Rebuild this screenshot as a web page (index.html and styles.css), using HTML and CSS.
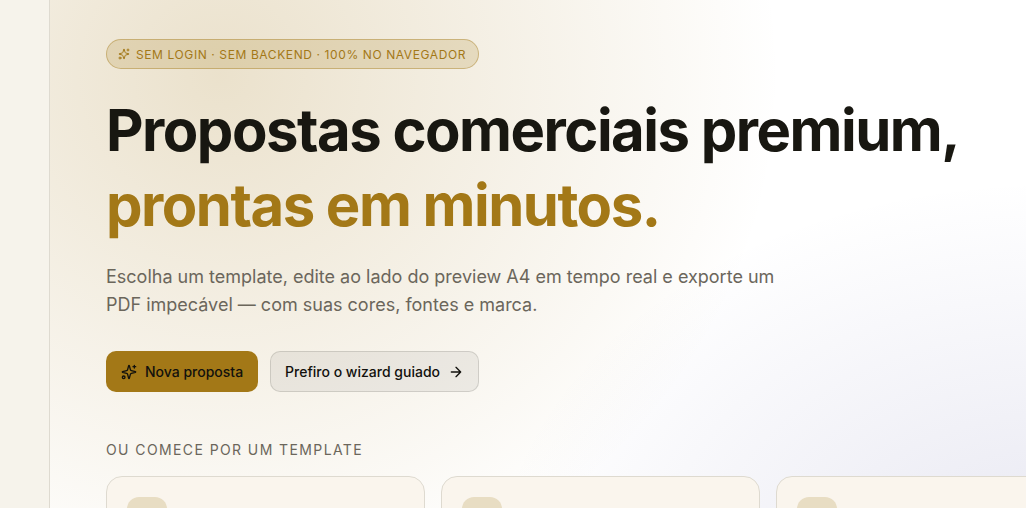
FILE: index.html
```html
<!DOCTYPE html>
<html lang="pt-BR">
<head>
<meta charset="utf-8">
<meta name="viewport" content="width=device-width, initial-scale=1">
<title>Propostas comerciais</title>
<link rel="stylesheet" href="styles.css">
</head>
<body>
<svg class="sprite" aria-hidden="true">
  <symbol id="sparkles" viewBox="0 0 24 24">
    <path d="M9.94 15.5A2 2 0 0 0 8.5 14.06l-6.14-1.58a.5.5 0 0 1 0-.96L8.5 9.94A2 2 0 0 0 9.94 8.5l1.58-6.14a.5.5 0 0 1 .96 0L14.06 8.5a2 2 0 0 0 1.44 1.44l6.14 1.58a.5.5 0 0 1 0 .96l-6.14 1.58a2 2 0 0 0-1.44 1.44l-1.58 6.14a.5.5 0 0 1-.96 0z"/>
    <path d="M20 2v4M22 4h-4"/><circle cx="4" cy="20" r="2"/>
  </symbol>
</svg>
<main class="hero">
  <p class="badge"><svg class="icon icon-small" aria-hidden="true"><use href="#sparkles"/></svg><span>SEM LOGIN · SEM BACKEND · 100% NO NAVEGADOR</span></p>
  <h1 class="title">Propostas comerciais premium,<br><span class="accent">prontas em minutos.</span></h1>
  <p class="lead">Escolha um template, edite ao lado do preview A4 em tempo real e exporte um PDF impecável — com suas cores, fontes e marca.</p>
  <div class="actions">
    <button class="button button-primary" type="button"><svg class="icon" aria-hidden="true"><use href="#sparkles"/></svg>Nova proposta</button>
    <button class="button button-secondary" type="button">Prefiro o wizard guiado<svg class="icon" viewBox="0 0 24 24" aria-hidden="true"><path d="M5 12h14M12 5l7 7-7 7"/></svg></button>
  </div>
  <h2 class="section-label">OU COMECE POR UM TEMPLATE</h2>
  <div class="templates">
    <article class="card"><div class="card-icon"></div></article>
    <article class="card"><div class="card-icon"></div></article>
    <article class="card"><div class="card-icon"></div></article>
  </div>
</main>
</body>
</html>
```
FILE: styles.css
```css
* { box-sizing: border-box; }
body {
  margin: 0;
  padding-left: 49px;
  background: #f6f3eb;
  color: #181711;
  font-family: Inter, "Liberation Sans", sans-serif;
  overflow: hidden;
}
.sprite { position: absolute; width: 0; height: 0; }
.hero {
  min-height: 100vh;
  padding: 39px 0 0 56px;
  border-left: 1px solid #dedad0;
  background:
    radial-gradient(ellipse 560px 540px at 170px 75px, rgba(163, 120, 23, .22), transparent),
    radial-gradient(ellipse 560px 400px at 1000px 580px, rgba(70, 70, 150, .13), transparent),
    #fff;
}
.icon {
  flex: none;
  width: 16px;
  height: 16px;
  fill: none;
  stroke: currentColor;
  stroke-width: 2;
  stroke-linecap: round;
  stroke-linejoin: round;
}
.icon-small { width: 12px; height: 12px; }
.badge {
  display: inline-flex;
  align-items: center;
  gap: 6px;
  height: 30px;
  margin: 0;
  padding: 0 12px 0 11px;
  border: 1px solid rgba(163, 120, 23, .4);
  border-radius: 15px;
  background: rgba(163, 120, 23, .18);
  color: #a37817;
  font-size: 12px;
  letter-spacing: .6px;
  white-space: nowrap;
}
.title {
  margin: 24px 0 0;
  font-size: 58px;
  font-weight: 700;
  line-height: 75px;
  letter-spacing: -1.5px;
}
.accent { color: #a37817; }
.lead {
  max-width: 672px;
  margin: 20px 0 0;
  color: #6b665b;
  font-size: 18px;
  line-height: 28px;
}
.actions { display: flex; gap: 12px; margin-top: 32px; }
.button {
  display: flex;
  align-items: center;
  gap: 8px;
  height: 41px;
  padding: 0 14px;
  border: 1px solid transparent;
  border-radius: 10px;
  color: #12110d;
  font: 500 14px/20px Inter, "Liberation Sans", sans-serif;
}
.button-primary { background: #a37817; }
.button-secondary { background: rgba(24, 23, 17, .06); border-color: rgba(24, 23, 17, .13); }
.section-label {
  margin: 48px 0 16px;
  color: #6b665b;
  font-size: 14px;
  font-weight: 400;
  line-height: 20px;
  letter-spacing: 1.4px;
}
.templates {
  display: grid;
  grid-auto-flow: column;
  grid-auto-columns: 319px;
  gap: 16px;
  overflow: hidden;
}
.card {
  padding: 20px;
  border: 1px solid #dedad0;
  border-radius: 16px;
  background: #faf5ed;
}
.card-icon {
  width: 40px;
  height: 40px;
  border-radius: 12px;
  background: #e8ddc3;
}
```
